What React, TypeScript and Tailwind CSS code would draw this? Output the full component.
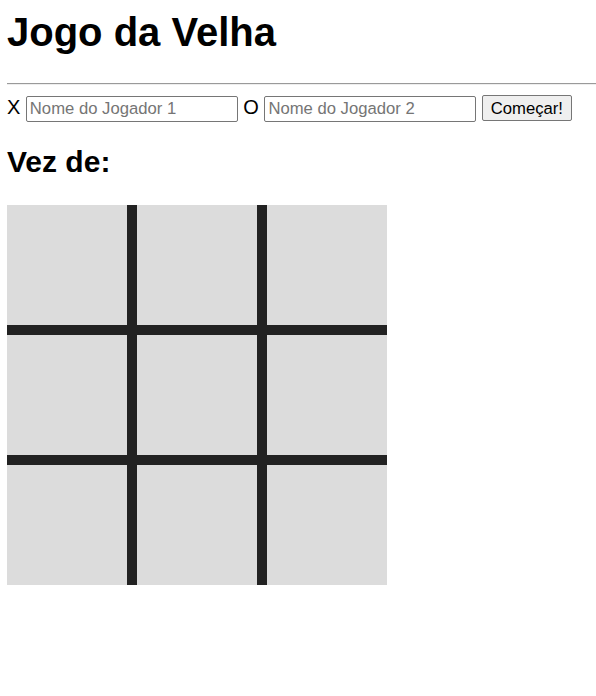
import React from 'react';

const cells = Array.from({ length: 9 }, (_, i) => i);

export default function App() {
  return (
    <div className="min-h-[696px] bg-white pl-[7px] text-black font-['Liberation_Sans',Arial,sans-serif]">
      <h1 className="pt-[9px] text-[40px] font-bold leading-[46px]">Jogo da Velha</h1>

      <hr className="mt-[28px] border-t border-b border-t-[#9a9a9a] border-b-[#eeeeee]" />

      {/* jogadores */}
      <div className="mt-[10px] flex items-baseline gap-[5.5px] text-[20px] leading-[23px]">
        <span>X</span>
        <input
          type="text"
          placeholder="Nome do Jogador 1"
          className="h-[26px] w-[212px] rounded-[2px] border border-[#767676] bg-white pl-[3px] text-[16.67px] leading-[19px] placeholder:text-[#757575] outline-none"
        />
        <span>O</span>
        <input
          type="text"
          placeholder="Nome do Jogador 2"
          className="h-[26px] w-[212px] rounded-[2px] border border-[#767676] bg-white pl-[3px] text-[16.67px] leading-[19px] placeholder:text-[#757575] outline-none"
        />
        <button className="h-[26px] w-[90px] rounded-[2px] border border-[#767676] bg-[#efefef] text-[16.67px] leading-[19px]">
          Começar!
        </button>
      </div>

      <h2 className="mt-[23px] text-[30px] font-bold leading-[34px]">Vez de:</h2>

      {/* tabuleiro */}
      <div className="mt-[26px] grid w-[380px] grid-cols-[120px_120px_120px] gap-[10px] bg-[#222222]">
        {cells.map((c) => (
          <div key={c} className="h-[120px] bg-[#dcdcdc]" />
        ))}
      </div>
    </div>
  );
}
